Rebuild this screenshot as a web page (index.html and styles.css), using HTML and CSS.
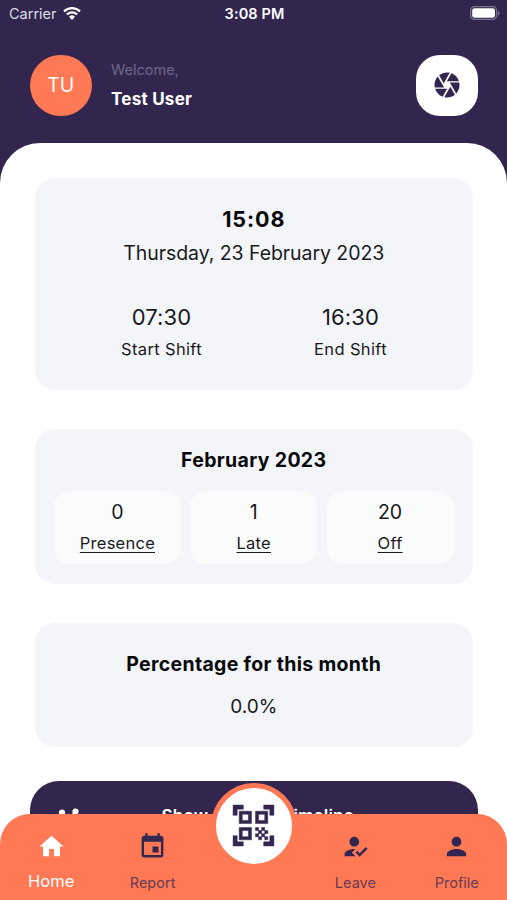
FILE: index.html
```html
<!DOCTYPE html>
<html lang="en">
<head>
<meta charset="utf-8">
<meta name="viewport" content="width=device-width, initial-scale=1">
<title>Attendance</title>
<link rel="stylesheet" href="styles.css">
</head>
<body>
<div class="app">
  <div class="status">
    <div class="carrier"><span>Carrier</span>
      <svg class="wifi" viewBox="0 0 18 14"><path d="M9 14l3-3.3a4.4 4.4 0 0 0-6 0z"/><path class="arc" d="M3.9 8.5a7.4 7.4 0 0 1 10.2 0M1 5.4a11.6 11.6 0 0 1 16 0"/></svg>
    </div>
    <div class="clock">3:08 PM</div>
    <svg class="battery" viewBox="0 0 30 14"><rect class="shell" x=".6" y=".6" width="26" height="12.8" rx="4"/><rect x="2.2" y="2.2" width="22.8" height="9.6" rx="2.4"/><path class="tip" d="M28 5v4.4q1.6-.6 1.6-2.2T28 5z"/></svg>
  </div>
  <header class="header">
    <div class="avatar">TU</div>
    <div class="who"><div class="welcome">Welcome,</div><div class="name">Test User</div></div>
    <button class="camera" aria-label="Camera"><svg viewBox="0 0 24 24"><path d="M9.4 10.5l4.77-8.26C13.47 2.09 12.75 2 12 2c-2.4 0-4.6.85-6.32 2.25l3.66 6.35.06-.1zM21.54 9c-.92-2.92-3.15-5.26-6-6.34L11.88 9h9.66zm.26 1h-7.49l.29.5 4.76 8.25C21 16.97 22 14.61 22 12c0-.69-.07-1.35-.2-2zM8.54 12l-3.9-6.75C3.01 7.03 2 9.39 2 12c0 .69.07 1.35.2 2h7.49l-1.15-2zm-6.08 3c.92 2.92 3.15 5.26 6 6.34L12.12 15H2.46zm11.27 0l-3.9 6.76c.7.15 1.42.24 2.17.24 2.4 0 4.6-.85 6.32-2.25l-3.66-6.35-.93 1.6z"/></svg></button>
  </header>
  <main class="sheet">
    <section class="card today">
      <div class="now">15:08</div>
      <div class="date">Thursday, 23 February 2023</div>
      <div class="shifts">
        <div><div class="time">07:30</div><div class="label">Start Shift</div></div>
        <div><div class="time">16:30</div><div class="label">End Shift</div></div>
      </div>
    </section>
    <section class="card month">
      <h2 class="month-title">February 2023</h2>
      <div class="stats">
        <div class="stat"><div class="count">0</div><a class="link">Presence</a></div>
        <div class="stat"><div class="count">1</div><a class="link">Late</a></div>
        <div class="stat"><div class="count">20</div><a class="link">Off</a></div>
      </div>
    </section>
    <section class="card percent">
      <h2 class="percent-title">Percentage for this month</h2>
      <div class="value">0.0%</div>
    </section>
    <button class="timeline">
      <svg class="timeline-icon" viewBox="0 0 24 24"><circle cx="6" cy="6.500" r="3.100"/><circle cx="19.500" cy="5.500" r="3.100"/><path d="M2 14l4-8 7 9 6-10"/></svg>
      <span>Show Activity Timeline</span>
    </button>
  </main>
  <nav class="nav">
    <a class="tab active"><svg viewBox="0 0 24 24"><path d="M10 20v-6h4v6h5v-8h3L12 3 2 12h3v8z"/></svg><span>Home</span></a>
    <a class="tab"><svg viewBox="0 0 24 24"><path d="M17 12h-5v5h5v-5zM16 1v2H8V1H6v2H5c-1.11 0-1.99.9-1.99 2L3 19c0 1.1.89 2 2 2h14c1.1 0 2-.9 2-2V5c0-1.1-.9-2-2-2h-1V1h-2zm3 18H5V8h14v11z"/></svg><span>Report</span></a>
    <div class="slot"></div>
    <a class="tab"><svg viewBox="0 0 24 24"><path d="M9 17l3-2.94c-.39-.04-.68-.06-1-.06-2.67 0-8 1.34-8 4v2h9l-3-3zm2-5c2.21 0 4-1.79 4-4s-1.79-4-4-4-4 1.79-4 4 1.79 4 4 4m4.470 8.500L12 17l1.400-1.410 2.070 2.080 5.130-5.170 1.400 1.410z"/></svg><span>Leave</span></a>
    <a class="tab"><svg viewBox="0 0 24 24"><path d="M12 12c2.21 0 4-1.79 4-4s-1.79-4-4-4-4 1.79-4 4 1.79 4 4 4zm0 2c-2.67 0-8 1.34-8 4v2h16v-2c0-2.66-5.33-4-8-4z"/></svg><span>Profile</span></a>
    <button class="scan" aria-label="Scan"><svg viewBox="0 0 24 24"><path d="M9.5 6.5v3h-3v-3h3M11 5H5v6h6V5zm-1.500 9.500v3h-3v-3h3M11 13H5v6h6v-6zm6.500-6.500v3h-3v-3h3M19 5h-6v6h6V5zm-6 8h1.500v1.500H13V13zm1.500 1.500H16V16h-1.500v-1.500zM16 13h1.500v1.500H16V13zm-3 3h1.500v1.500H13V16zm1.500 1.500H16V19h-1.500v-1.500zM16 16h1.500v1.500H16V16zm1.500-1.500H19V16h-1.500v-1.500zm0 3H19V19h-1.500v-1.500zM22 7h-2V4h-3V2h5v5zm0 15v-5h-2v3h-3v2h5zM2 22h5v-2H4v-3H2v5zM2 2v5h2V4h3V2H2z"/></svg></button>
  </nav>
</div>
</body>
</html>
```
FILE: styles.css
```css
* { box-sizing: border-box; }
body { margin: 0; font-family: Inter, "Liberation Sans", sans-serif; color: #191a1c; }
button { border: 0; padding: 0; font: inherit; }
h2 { margin: 0; }
svg { display: block; fill: currentColor; }
.app { position: relative; height: 900px; overflow: hidden; background: #32264f; display: flex; flex-direction: column; }
.status { height: 28px; flex: none; display: grid; grid-template-columns: 1fr auto 1fr; align-items: center; padding: 0 7px 2px 9px; color: #fff; }
.carrier { display: flex; align-items: center; gap: 6px; font-size: 14.500px; color: #dedbe5; }
.wifi { width: 18px; height: 14px; color: #fff; }
.arc { fill: none; stroke: #fff; stroke-width: 2.300; }
.clock { font-size: 14.500px; font-weight: 600; letter-spacing: .1px; }
.battery { width: 30px; height: 14px; justify-self: end; }
.shell { fill: none; stroke: #7d7590; stroke-width: 1.200; }
.tip { fill: #7d7590; }
.header { height: 114.500px; flex: none; display: flex; align-items: flex-start; padding: 26.500px 29.500px 0 30px; }
.avatar { width: 61.500px; height: 61.500px; border-radius: 50%; background: #ff7955; color: #fff; font-size: 19.500px; display: grid; place-items: center; }
.who { margin-left: 19.500px; padding-top: 5px; flex: 1; }
.welcome { font-size: 14.500px; line-height: 20px; color: #70678a; }
.name { margin-top: 8px; font-size: 17px; line-height: 22px; font-weight: 700; letter-spacing: .25px; color: #fff; }
.camera { width: 61.500px; height: 61.500px; border-radius: 24px; background: #fff; color: #32264f; display: grid; place-items: center; }
.camera svg { width: 30px; height: 30px; }
.sheet { flex: 1; background: #fff; border-radius: 40px 40px 0 0; padding: 35px 29.500px 0 30px; }
.card { margin: 0 5px 39px; border-radius: 20px; background: #f3f5f9; text-align: center; overflow: hidden; }
.today { height: 212px; padding-top: 27.500px; }
.now { font-size: 21.500px; line-height: 28px; font-weight: 700; letter-spacing: .9px; color: #08090a; }
.date { margin-top: 6px; font-size: 19.500px; line-height: 28px; letter-spacing: -.06px; }
.shifts { margin-top: 35px; display: grid; grid-template-columns: 1fr 1fr; padding: 0 27.500px 0 32px; }
.time { font-size: 22px; line-height: 30px; letter-spacing: .1px; }
.label { margin-top: 5px; font-size: 16.500px; line-height: 24px; letter-spacing: .35px; }
.month { height: 155px; padding: 17px 19px 0; }
.month-title, .percent-title { font-size: 19.500px; line-height: 28px; font-weight: 700; letter-spacing: .32px; color: #08090a; }
.stats { margin-top: 17px; display: grid; grid-template-columns: repeat(3, 1fr); gap: 9.500px; }
.stat { height: 73px; border-radius: 16px; background: #fafbfb; padding-top: 8px; }
.count { font-size: 19.500px; line-height: 26px; }
.link { display: block; margin-top: 6px; font-size: 16.500px; line-height: 24px; letter-spacing: .25px; text-decoration: underline; text-underline-offset: 3px; text-decoration-thickness: 1px; text-decoration-skip-ink: none; }
.percent { height: 124px; padding-top: 27px; margin-bottom: 34.500px; }
.value { margin-top: 15px; font-size: 19px; line-height: 28px; }
.timeline { position: relative; display: grid; place-items: center; width: 100%; height: 69px; padding-left: 8px; border-radius: 29px; background: #32264f; color: #fff; font-size: 17px; font-weight: 600; letter-spacing: .2px; }
.timeline-icon { position: absolute; left: 26px; top: 25px; width: 24px; height: 24px; }
.timeline-icon path { fill: none; stroke: #fff; stroke-width: 2; }
.nav { position: absolute; left: 0; right: 0; bottom: 0; height: 86.500px; display: grid; grid-template-columns: repeat(5, 1fr); border-radius: 30px 30px 0 0; background: #ff7955; }
.tab { display: flex; flex-direction: column; align-items: center; padding: 18px 0 0 1px; color: #32264f; }
.tab svg { width: 29px; height: 29px; }
.tab span { margin-top: 12px; font-size: 14.500px; line-height: 20px; color: #693b51; }
.tab.active { color: #fff; }
.tab.active span { margin-top: 10px; font-size: 16.500px; color: #fff; }
.scan { position: absolute; left: 210.500px; top: -31px; width: 86px; height: 86px; border-radius: 50%; border: 5px solid #ff7955; background: #fff; color: #32264f; display: grid; place-items: center; }
.scan svg { width: 49px; height: 49px; }
.scan path { stroke: currentColor; stroke-width: .25; }
```
